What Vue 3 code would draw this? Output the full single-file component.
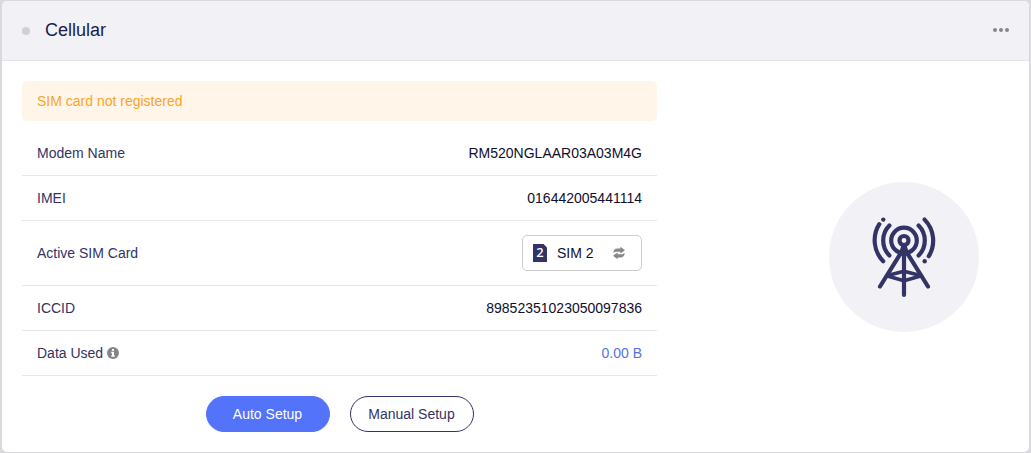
<script setup>
import { ref, computed } from 'vue';

const activeSim = ref(2);

const modem = {
  name: 'RM520NGLAAR03A03M4G',
  imei: '016442005441114',
  iccid: '89852351023050097836',
  dataUsed: '0.00 B'
};

const simLabel = computed(() => `SIM ${activeSim.value}`);

const switchSim = () => {
  activeSim.value = activeSim.value === 2 ? 1 : 2;
};
</script>

<template>
  <section class="card">
    <header class="card-header">
      <span class="status-dot"></span>
      <h2 class="card-title">Cellular</h2>
      <button class="more-btn" type="button" aria-label="More">
        <svg width="16" height="4" viewBox="0 0 16 4">
          <circle cx="2" cy="2" r="2" />
          <circle cx="8" cy="2" r="2" />
          <circle cx="14" cy="2" r="2" />
        </svg>
      </button>
    </header>

    <div class="card-body">
      <div class="details">
        <div class="alert">SIM card not registered</div>
        <dl class="info-list">
          <div class="info-row">
            <dt>Modem Name</dt>
            <dd>{{ modem.name }}</dd>
          </div>
          <div class="info-row">
            <dt>IMEI</dt>
            <dd>{{ modem.imei }}</dd>
          </div>
          <div class="info-row">
            <dt>Active SIM Card</dt>
            <dd>
              <button class="sim-btn" type="button" @click="switchSim">
                <span class="sim-icon">{{ activeSim }}</span>
                <span class="sim-label">{{ simLabel }}</span>
                <svg class="switch-icon" width="12" height="12" viewBox="0 0 12 12">
                  <path d="M0.4 6C0.4 3 2 1.6 4.4 1.6H7.4V-0.2L12 3.2L7.4 6.5V4.8H4.4C2.6 4.8 1.4 5 0.4 6Z" />
                  <path d="M11.6 6C11.6 9 10 10.4 7.6 10.4H4.6V12.2L0 8.8L4.6 5.5V7.2H7.6C9.4 7.2 10.6 7 11.6 6Z" />
                </svg>
              </button>
            </dd>
          </div>
          <div class="info-row">
            <dt>ICCID</dt>
            <dd>{{ modem.iccid }}</dd>
          </div>
          <div class="info-row">
            <dt>
              Data Used
              <svg class="info-icon" width="12" height="12" viewBox="0 0 12 12">
                <circle cx="6" cy="6" r="6" />
                <path fill="#fff" d="M5 2h2v1.8H5zM4.2 4.8H7v3.6h0.8v1.4H4.2V8.4H5V6.2H4.2z" />
              </svg>
            </dt>
            <dd><a class="data-link" href="#">{{ modem.dataUsed }}</a></dd>
          </div>
        </dl>
        <div class="actions">
          <button class="btn btn-primary" type="button">Auto Setup</button>
          <button class="btn btn-outline" type="button">Manual Setup</button>
        </div>
      </div>

      <div class="visual">
        <div class="visual-circle">
          <svg width="150" height="150" viewBox="0 0 150 150">
            <g fill="none" stroke="#333366" stroke-width="4.2" stroke-linecap="round" stroke-linejoin="round">
              <circle cx="75" cy="58.5" r="4.5" />
              <circle cx="75" cy="58.5" r="12.8" />
              <path d="M60.4 43.6A21 21 0 0 0 60.4 73.4M89.6 43.6A21 21 0 0 1 89.6 73.4" />
              <path d="M50.3 42.2A30 30 0 0 0 54.2 79.2M95.6 37.6A30 30 0 0 1 99.8 74.2" />
              <path d="M75 66V113M75 66L51 104.5M75 66L99 104.5" />
              <path stroke-width="3.6" d="M57.5 93.8L75 89.2L92.5 93.8L75 98.8Z" />
            </g>
            <g fill="#333366">
              <path d="M73 62H77L81 73.5H69Z" />
              <circle cx="54.3" cy="37.6" r="2.2" />
              <circle cx="95.7" cy="79.2" r="2.2" />
            </g>
          </svg>
        </div>
      </div>
    </div>
  </section>
</template>

<style>
body {
  background: #d9d9de;
}
</style>

<style scoped>
.card {
  margin: 1px 2px;
  border-radius: 5px;
  background: #fff;
  overflow: hidden;
  color: #333366;
  font-family: "Liberation Sans", Arial, sans-serif;
  font-size: 14px;
  line-height: 20px;
}

.card-header {
  display: flex;
  align-items: center;
  box-sizing: border-box;
  height: 60px;
  padding: 0 20px;
  background: #f2f1f6;
  border-bottom: 1px solid #e6e6ea;
}

.status-dot {
  width: 8px;
  height: 8px;
  margin-right: 15px;
  border-radius: 50%;
  background: #d1d0d6;
}

.card-title {
  flex: 1;
  margin: 0 0 2px;
  font-size: 18px;
  font-weight: normal;
  color: #1c1c4c;
}

.more-btn {
  display: flex;
  padding: 8px 0 10px;
  border: 0;
  background: none;
  fill: #85858c;
  cursor: pointer;
}

.card-body {
  display: grid;
  grid-template-columns: minmax(0, 635fr) minmax(0, 352fr);
  padding: 20px;
}

.alert {
  margin-bottom: 10px;
  padding: 10px 15px;
  border-radius: 5px;
  background: #fff5e9;
  color: #f9a52b;
}

.info-list {
  margin: 0;
}

.info-row {
  display: flex;
  align-items: center;
  justify-content: space-between;
  padding: 12px 15px;
  border-bottom: 1px solid #e8e8e8;
}

.info-row dd {
  margin: 0;
  color: #0f0f2d;
}

.info-icon {
  vertical-align: -1px;
  fill: #85858c;
}

.data-link {
  color: #5273e8;
  text-decoration: none;
}

.sim-btn {
  display: flex;
  align-items: center;
  width: 120px;
  height: 36px;
  margin: 2px 0;
  padding: 0 16px 0 10px;
  border: 1px solid #ccc;
  border-radius: 5px;
  background: #fff;
  color: #0f0f2d;
  font: inherit;
  cursor: pointer;
}

.sim-icon {
  box-sizing: border-box;
  width: 14px;
  height: 18px;
  margin-right: 10px;
  background: #333366;
  clip-path: polygon(0 0, 75% 0, 100% 20%, 100% 100%, 0 100%);
  color: #fff;
  font-family: "Noto Sans", sans-serif;
  font-size: 13px;
  font-weight: 500;
  line-height: 16px;
  text-align: center;
}

.sim-label {
  flex: 1;
  text-align: left;
}

.switch-icon {
  overflow: visible;
  fill: #888;
}

.actions {
  display: flex;
  justify-content: center;
  gap: 20px;
  margin-top: 20px;
}

.btn {
  width: 124px;
  height: 36px;
  padding: 0;
  border: 1px solid #333366;
  border-radius: 18px;
  background: #fff;
  color: #333366;
  font: inherit;
  cursor: pointer;
}

.btn-primary {
  border-color: #5273fa;
  background: #5273fa;
  color: #fff;
}

.visual {
  display: flex;
  align-items: center;
  justify-content: flex-end;
  padding-right: 30px;
}

.visual-circle {
  width: 150px;
  height: 150px;
  border-radius: 50%;
  background: #f2f1f6;
}
</style>
